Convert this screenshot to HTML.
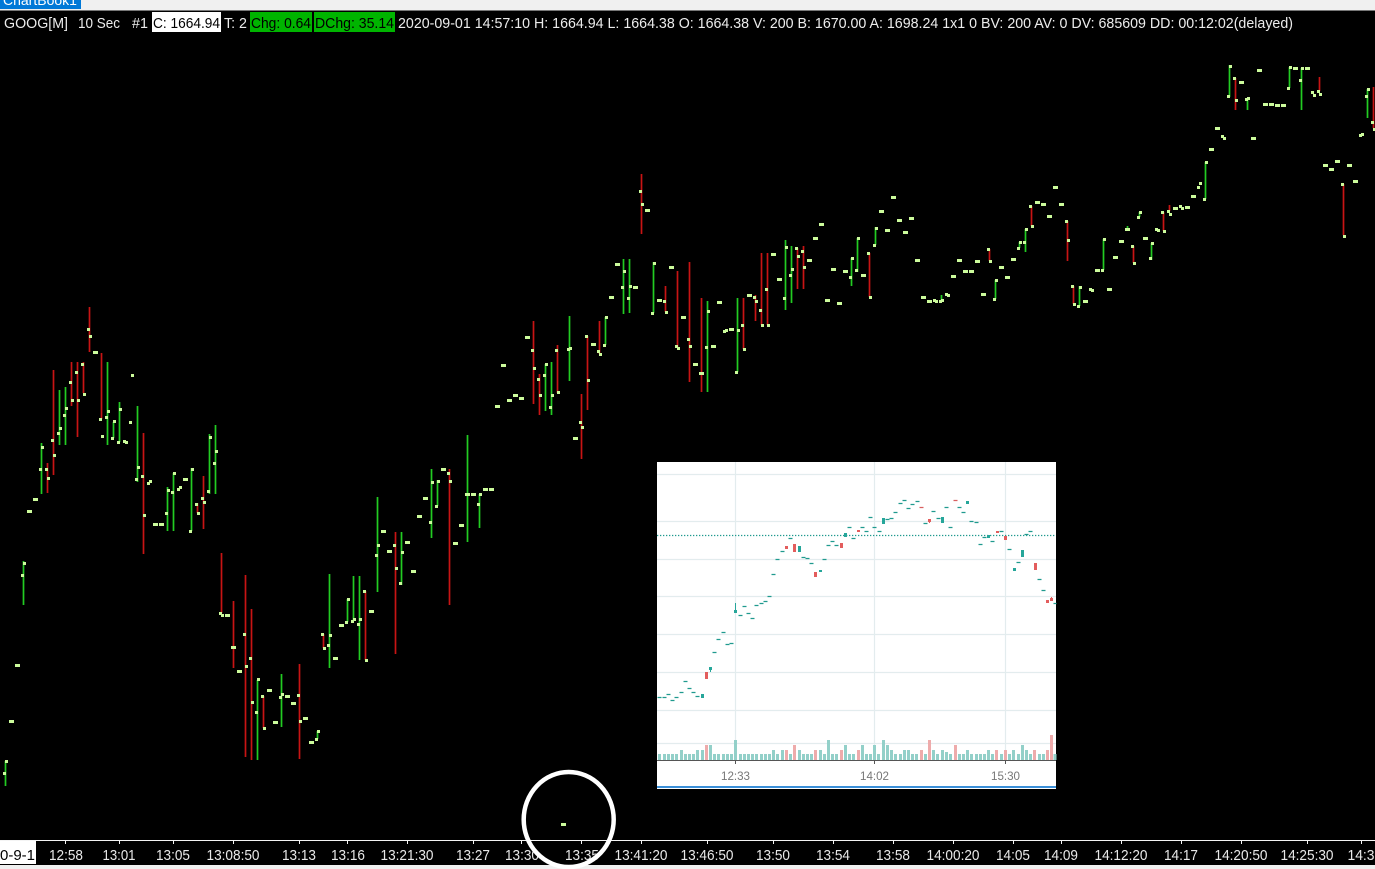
<!DOCTYPE html>
<html lang="en">
<head>
<meta charset="utf-8">
<title>GOOG chart</title>
<style>
html,body{margin:0;padding:0;background:#000;width:1375px;height:869px;overflow:hidden}
svg{display:block;position:absolute;left:0;top:0}
text{font-family:"Liberation Sans",sans-serif}
</style>
</head>
<body>
<svg width="1375" height="869" viewBox="0 0 1375 869" xmlns="http://www.w3.org/2000/svg">
<rect width="1375" height="869" fill="#000"/>
<!-- top strip -->
<rect width="1375" height="10" fill="#f0f0f0"/>
<rect y="10" width="1375" height="1" fill="#777"/>
<rect width="81" height="9" fill="#0078d7"/>
<svg x="0" y="0" width="81" height="9"><text x="3" y="5" font-size="14" fill="#fff">ChartBook1</text></svg>
<!-- header -->
<rect x="152" y="12" width="69" height="20" fill="#fff"/>
<rect x="250" y="12" width="62" height="20" fill="#00b400"/>
<rect x="314" y="12" width="81" height="20" fill="#00b400"/>
<g font-size="15" fill="#ececec">
<text x="4" y="28" textLength="64" lengthAdjust="spacingAndGlyphs">GOOG[M]</text>
<text x="78" y="28" textLength="42" lengthAdjust="spacingAndGlyphs">10 Sec</text>
<text x="132" y="28" textLength="16" lengthAdjust="spacingAndGlyphs">#1</text>
<text x="153" y="28" textLength="67" lengthAdjust="spacingAndGlyphs" fill="#000">C: 1664.94</text>
<text x="224" y="28" textLength="23" lengthAdjust="spacingAndGlyphs">T: 2</text>
<text x="251" y="28" textLength="60" lengthAdjust="spacingAndGlyphs" fill="#000">Chg: 0.64</text>
<text x="315" y="28" textLength="79" lengthAdjust="spacingAndGlyphs" fill="#000">DChg: 35.14</text>
<text x="398" y="28" textLength="895" lengthAdjust="spacingAndGlyphs">2020-09-01 14:57:10 H: 1664.94 L: 1664.38 O: 1664.38 V: 200 B: 1670.00 A: 1698.24 1x1 0 BV: 200 AV: 0 DV: 685609 DD: 00:12:02(delayed)</text>
</g>
<!-- green wicks -->
<path fill="none" stroke="#22cc22" stroke-width="1.7" d="M5.5 761V786M23.5 561V605M41.5 443V494M59.5 390V445M65.5 387V445M107.5 362V445M113.5 422V438M119.5 402V442M137.5 406V482M167.5 487V531M173.5 473V531M191.5 468V531M209.5 434V494M215.5 425V494M257.5 680V760M281.5 674V727M317.5 731V739M329.5 574V668M347.5 599V622M353.5 576V621M359.5 576V660M377.5 497V592M401.5 532V585M431.5 469V538M437.5 480V506M467.5 435V542M479.5 494V528M545.5 364V411M551.5 362V415M569.5 316V381M605.5 317V345M623.5 259V314M629.5 259V313M653.5 262V313M707.5 301V392M737.5 298V372M785.5 240V310M791.5 246V303M851.5 258V286M857.5 238V272M875.5 227V245M941.5 295V301M995.5 280V299M1019.5 242V248M1025.5 229V252M1079.5 286V306M1103.5 239V270M1127.5 226V230M1139.5 212V217M1151.5 243V260M1205.5 162V199M1229.5 65V97M1247.5 98V110M1289.5 67V88M1301.5 68V110M1367.5 89V118"/>
<!-- red wicks -->
<path fill="none" stroke="#c81414" stroke-width="1.7" d="M47.5 463V493M53.5 370V475M71.5 362V406M77.5 362V437M83.5 362V393M89.5 307V352M101.5 353V419M143.5 433V554M197.5 503V513M203.5 476V529M221.5 553V613M233.5 601V668M245.5 575V757M251.5 609V760M263.5 696V728M299.5 664V759M323.5 634V648M365.5 591V660M395.5 532V654M449.5 469V605M533.5 321V404M539.5 374V415M557.5 345V393M581.5 394V459M587.5 336V410M599.5 321V354M641.5 174V234M665.5 286V312M677.5 271V348M689.5 262V382M701.5 298V392M743.5 298V349M755.5 295V321M761.5 253V325M767.5 253V325M797.5 248V289M803.5 246V289M869.5 253V297M989.5 249V261M1031.5 206V226M1067.5 221V261M1073.5 286V304M1133.5 246V263M1163.5 212V231M1169.5 205V211M1235.5 78V110M1319.5 77V91M1343.5 184V235M1373.5 87V128"/>
<!-- open/close ticks -->
<path fill="none" stroke="#ccfb9c" stroke-width="3" d="M3 773.5h3M5 761.5h3M9 721.5h5M15 665.5h5M21 575.5h3M23 563.5h3M27 511.5h5M33 499.5h5M39 469.5h3M41 447.5h3M45 469.5h3M47 478.5h3M51 440.5h3M53 455.5h3M57 433.5h3M59 428.5h3M63 415.5h3M65 408.5h3M69 382.5h3M71 400.5h3M75 372.5h3M77 400.5h3M81 364.5h3M83 394.5h3M87 329.5h3M89 336.5h3M93 352.5h5M99 419.5h3M101 436.5h3M105 417.5h3M107 411.5h3M111 438.5h3M113 421.5h3M117 442.5h3M119 409.5h3M123 441.5h3M125 442.5h3M129 422.5h3M131 375.5h3M135 479.5h3M137 467.5h3M141 476.5h3M143 515.5h3M147 483.5h3M149 481.5h3M153 524.5h5M159 524.5h5M165 513.5h3M167 490.5h3M171 492.5h3M173 473.5h3M177 489.5h3M179 487.5h3M183 479.5h5M189 531.5h3M191 469.5h3M195 504.5h3M197 513.5h3M201 498.5h3M203 502.5h3M207 491.5h3M209 437.5h3M213 463.5h3M215 451.5h3M219 613.5h3M221 615.5h3M225 615.5h5M231 647.5h5M237 671.5h5M243 634.5h3M245 666.5h3M249 658.5h3M251 702.5h3M255 712.5h3M257 679.5h3M261 696.5h3M263 728.5h3M267 690.5h5M273 722.5h5M279 697.5h3M281 694.5h3M285 696.5h5M291 703.5h5M297 695.5h3M299 721.5h3M303 718.5h5M309 742.5h5M315 739.5h3M317 731.5h3M321 634.5h3M323 648.5h3M327 645.5h3M329 635.5h3M333 658.5h5M339 625.5h5M345 622.5h3M347 599.5h3M351 621.5h3M353 619.5h3M357 624.5h3M359 619.5h3M363 591.5h3M365 660.5h3M369 611.5h5M375 555.5h3M377 545.5h3M381 531.5h5M387 551.5h5M393 545.5h3M395 568.5h3M399 583.5h3M401 552.5h3M405 542.5h5M411 571.5h5M417 516.5h5M423 498.5h5M429 522.5h3M431 482.5h3M435 506.5h3M437 481.5h3M441 469.5h5M447 473.5h3M449 481.5h3M453 543.5h5M459 525.5h5M465 494.5h5M471 494.5h5M477 504.5h3M479 494.5h3M483 489.5h5M489 489.5h5M495 406.5h5M501 365.5h5M507 400.5h5M513 395.5h5M519 398.5h5M525 337.5h5M531 350.5h3M533 368.5h3M537 379.5h3M539 395.5h3M543 375.5h3M545 364.5h3M549 407.5h3M551 395.5h3M555 350.5h3M557 392.5h3M561 824.5h5M567 349.5h3M569 348.5h3M573 438.5h5M579 422.5h3M581 427.5h3M585 336.5h3M587 380.5h3M591 344.5h5M597 351.5h3M599 354.5h3M603 345.5h3M605 317.5h3M609 297.5h5M615 264.5h5M621 287.5h3M623 271.5h3M627 298.5h3M629 286.5h3M633 287.5h5M639 191.5h3M641 204.5h3M645 210.5h5M651 313.5h3M653 263.5h3M657 300.5h5M663 301.5h3M665 312.5h3M669 267.5h5M675 346.5h3M677 348.5h3M681 317.5h5M687 339.5h3M689 346.5h3M693 364.5h5M699 373.5h5M705 347.5h3M707 311.5h3M711 346.5h5M717 302.5h5M723 331.5h3M725 330.5h3M729 329.5h5M735 372.5h3M737 330.5h3M741 325.5h3M743 349.5h3M747 295.5h5M753 297.5h3M755 301.5h3M759 310.5h3M761 325.5h3M765 289.5h3M767 325.5h3M771 254.5h5M777 279.5h5M783 298.5h3M785 247.5h3M789 275.5h3M791 269.5h3M795 248.5h3M797 256.5h3M801 251.5h3M803 267.5h3M807 260.5h5M813 238.5h5M819 224.5h5M825 300.5h5M831 269.5h5M837 303.5h5M843 271.5h5M849 277.5h3M851 258.5h3M855 270.5h3M857 238.5h3M861 275.5h5M867 253.5h3M869 297.5h3M873 245.5h3M875 228.5h3M879 211.5h5M885 230.5h5M891 197.5h5M897 220.5h5M903 232.5h5M909 218.5h5M915 260.5h5M921 297.5h5M927 301.5h5M933 300.5h3M935 301.5h3M939 301.5h3M941 300.5h3M945 294.5h3M947 295.5h3M951 276.5h5M957 260.5h5M963 271.5h5M969 271.5h5M975 261.5h5M981 294.5h5M987 249.5h3M989 261.5h3M993 299.5h3M995 280.5h3M999 267.5h5M1005 277.5h5M1011 259.5h5M1017 248.5h3M1019 242.5h3M1023 242.5h3M1025 229.5h3M1029 206.5h3M1031 226.5h3M1035 202.5h5M1041 204.5h5M1047 216.5h5M1053 187.5h5M1059 204.5h5M1065 221.5h3M1067 240.5h3M1071 286.5h3M1073 304.5h3M1077 306.5h3M1079 287.5h3M1083 301.5h5M1089 289.5h3M1091 290.5h3M1095 270.5h5M1101 270.5h3M1103 239.5h3M1107 289.5h5M1113 257.5h5M1119 241.5h5M1125 229.5h5M1131 246.5h3M1133 263.5h3M1137 217.5h3M1139 212.5h3M1143 238.5h5M1149 258.5h3M1151 243.5h3M1155 229.5h3M1157 230.5h3M1161 212.5h3M1163 231.5h3M1167 211.5h3M1169 214.5h3M1173 208.5h5M1179 206.5h3M1181 208.5h3M1185 207.5h5M1191 196.5h5M1197 187.5h3M1199 183.5h3M1203 199.5h3M1205 162.5h3M1209 149.5h5M1215 128.5h5M1221 136.5h3M1223 138.5h3M1227 96.5h3M1229 66.5h3M1233 78.5h3M1235 100.5h3M1239 82.5h5M1245 99.5h3M1247 98.5h3M1251 138.5h5M1257 70.5h5M1263 104.5h5M1269 104.5h5M1275 105.5h5M1281 105.5h5M1287 88.5h3M1289 67.5h3M1293 68.5h5M1299 80.5h3M1301 68.5h3M1305 68.5h5M1311 92.5h3M1313 95.5h3M1317 91.5h3M1319 94.5h3M1323 165.5h5M1329 169.5h5M1335 161.5h5M1341 184.5h3M1343 236.5h3M1347 165.5h5M1353 181.5h5M1359 135.5h3M1361 134.5h3M1365 96.5h3M1367 89.5h3M1371 122.5h3M1373 129.5h3"/>
<!-- bottom axis -->
<rect y="840" width="1375" height="1" fill="#f4f4f4"/>
<path fill="none" stroke="#f4f4f4" stroke-width="1" d="M5.5 841v3M65.5 841v3M119.5 841v3M173.5 841v3M233.5 841v3M299.5 841v3M347.5 841v3M407.5 841v3M473.5 841v3M521.5 841v3M581.5 841v3M641.5 841v3M707.5 841v3M773.5 841v3M833.5 841v3M893.5 841v3M953.5 841v3M1013.5 841v3M1061.5 841v3M1121.5 841v3M1181.5 841v3M1241.5 841v3M1307.5 841v3M1361.5 841v3"/>
<rect y="841" width="36" height="23" fill="#fff"/>
<text x="0" y="860" font-size="15" fill="#000" textLength="35" lengthAdjust="spacingAndGlyphs">0-9-1</text>
<g font-size="15" fill="#e8e8e8" text-anchor="middle">
<text x="66" y="860" textLength="34" lengthAdjust="spacingAndGlyphs">12:58</text>
<text x="119" y="860" textLength="33" lengthAdjust="spacingAndGlyphs">13:01</text>
<text x="173" y="860" textLength="34" lengthAdjust="spacingAndGlyphs">13:05</text>
<text x="233" y="860" textLength="53" lengthAdjust="spacingAndGlyphs">13:08:50</text>
<text x="299" y="860" textLength="34" lengthAdjust="spacingAndGlyphs">13:13</text>
<text x="348" y="860" textLength="34" lengthAdjust="spacingAndGlyphs">13:16</text>
<text x="407" y="860" textLength="53" lengthAdjust="spacingAndGlyphs">13:21:30</text>
<text x="473" y="860" textLength="34" lengthAdjust="spacingAndGlyphs">13:27</text>
<text x="522" y="860" textLength="34" lengthAdjust="spacingAndGlyphs">13:30</text>
<text x="582" y="860" textLength="34" lengthAdjust="spacingAndGlyphs">13:35</text>
<text x="641" y="860" textLength="53" lengthAdjust="spacingAndGlyphs">13:41:20</text>
<text x="707" y="860" textLength="53" lengthAdjust="spacingAndGlyphs">13:46:50</text>
<text x="773" y="860" textLength="34" lengthAdjust="spacingAndGlyphs">13:50</text>
<text x="833" y="860" textLength="34" lengthAdjust="spacingAndGlyphs">13:54</text>
<text x="893" y="860" textLength="34" lengthAdjust="spacingAndGlyphs">13:58</text>
<text x="953" y="860" textLength="53" lengthAdjust="spacingAndGlyphs">14:00:20</text>
<text x="1013" y="860" textLength="34" lengthAdjust="spacingAndGlyphs">14:05</text>
<text x="1061" y="860" textLength="34" lengthAdjust="spacingAndGlyphs">14:09</text>
<text x="1121" y="860" textLength="53" lengthAdjust="spacingAndGlyphs">14:12:20</text>
<text x="1181" y="860" textLength="34" lengthAdjust="spacingAndGlyphs">14:17</text>
<text x="1241" y="860" textLength="53" lengthAdjust="spacingAndGlyphs">14:20:50</text>
<text x="1307" y="860" textLength="53" lengthAdjust="spacingAndGlyphs">14:25:30</text>
<text x="1361" y="860" textLength="27" lengthAdjust="spacingAndGlyphs">14:3</text>
</g>
<rect y="865" width="1375" height="4" fill="#f0f0f0"/>
<!-- circle annotation -->
<ellipse cx="568.7" cy="819.5" rx="45" ry="47.5" fill="none" stroke="#fff" stroke-width="4.5"/>
<!-- inset chart -->
<rect x="657" y="462" width="399" height="327" fill="#fff"/>
<path fill="none" stroke="#e3ecee" stroke-width="1.2" d="M657 474.5H1056M657 521.5H1056M657 559.5H1056M657 596.5H1056M657 634.5H1056M657 672.5H1056M657 710.5H1056M657 743.5H1056M735.5 462V760M874.5 462V760M1005.5 462V760"/>
<path fill="none" stroke="#1f9a8e" stroke-width="1.2" stroke-dasharray="1.3 1.7" d="M657 535.5H1056"/>
<!-- volume -->
<path fill="none" stroke="#93d0c9" stroke-width="3" d="M659.5 760v-6M664.5 760v-6M668.5 760v-6M672.5 760v-6M676.5 760v-6M681.5 760v-10M685.5 760v-6M689.5 760v-6M693.5 760v-6M697.5 760v-10M702.5 760v-10M710.5 760v-15M714.5 760v-6M718.5 760v-6M723.5 760v-6M727.5 760v-6M731.5 760v-6M735.5 760v-20M740.5 760v-6M744.5 760v-6M748.5 760v-6M752.5 760v-6M756.5 760v-6M761.5 760v-6M765.5 760v-6M769.5 760v-6M773.5 760v-10M777.5 760v-6M782.5 760v-10M790.5 760v-6M799.5 760v-10M803.5 760v-6M807.5 760v-6M811.5 760v-6M820.5 760v-10M824.5 760v-6M828.5 760v-20M832.5 760v-6M836.5 760v-6M845.5 760v-15M849.5 760v-6M853.5 760v-6M862.5 760v-15M866.5 760v-6M870.5 760v-6M874.5 760v-15M878.5 760v-6M883.5 760v-20M887.5 760v-15M891.5 760v-10M895.5 760v-6M900.5 760v-6M904.5 760v-10M908.5 760v-10M912.5 760v-6M916.5 760v-6M925.5 760v-6M933.5 760v-10M937.5 760v-6M942.5 760v-10M946.5 760v-8M950.5 760v-6M959.5 760v-6M963.5 760v-6M967.5 760v-10M971.5 760v-6M976.5 760v-6M980.5 760v-6M984.5 760v-6M988.5 760v-10M992.5 760v-6M1001.5 760v-6M1009.5 760v-6M1013.5 760v-10M1018.5 760v-6M1022.5 760v-15M1026.5 760v-10M1030.5 760v-6M1039.5 760v-6M1043.5 760v-6M1055 760v-6"/>
<path fill="none" stroke="#eeabab" stroke-width="3" d="M706.5 760v-15M786.5 760v-10M794.5 760v-15M815.5 760v-10M841.5 760v-10M858.5 760v-10M921.5 760v-10M929.5 760v-20M955.5 760v-15M996.5 760v-10M1005.5 760v-10M1034.5 760v-10M1047.5 760v-10M1051.5 760v-25"/>
<!-- teal dashes -->
<path fill="none" stroke="#1f9a8e" stroke-width="1.3" d="M657.5 697.5h4M662.5 697.5h4M666.5 694.5h4M670.5 700.5h4M674.5 697.5h4M679.5 692.5h4M683.5 681.5h4M687.5 688.5h4M691.5 692.5h4M695.5 696.5h4M712.5 652.5h4M716.5 639.5h4M721.5 632.5h4M725.5 644.5h4M729.5 643.5h4M738.5 615.5h4M742.5 606.5h4M746.5 613.5h4M750.5 618.5h4M754.5 605.5h4M759.5 603.5h4M763.5 601.5h4M767.5 596.5h4M771.5 574.5h4M775.5 559.5h4M780.5 551.5h4M788.5 538.5h4M801.5 557.5h4M805.5 558.5h4M809.5 563.5h4M822.5 559.5h4M826.5 545.5h4M830.5 541.5h4M834.5 545.5h4M847.5 527.5h4M851.5 538.5h4M860.5 527.5h4M864.5 531.5h4M868.5 517.5h4M872.5 527.5h4M877.5 531.5h4M885.5 519.5h4M889.5 518.5h4M893.5 512.5h4M898.5 503.5h4M902.5 500.5h4M906.5 508.5h4M910.5 504.5h4M915.5 501.5h4M923.5 523.5h4M931.5 511.5h4M936.5 518.5h4M944.5 507.5h4M948.5 527.5h4M957.5 507.5h4M961.5 512.5h4M969.5 521.5h4M974.5 522.5h4M978.5 544.5h4M982.5 537.5h4M990.5 541.5h4M999.5 531.5h4M1007.5 549.5h4M1016.5 562.5h4M1024.5 534.5h4M1028.5 531.5h4M1037.5 579.5h4M1041.5 590.5h4M1053.5 603.5h3"/>
<path fill="none" stroke="#d95f5f" stroke-width="1.3" d="M919.5 507.5h4M953.5 500.5h4"/>
<!-- candle bodies -->
<path fill="none" stroke="#26a69a" stroke-width="3" d="M702.5 694V698M710.5 667V670M735.5 610V613M799.5 546V552M820.5 570V572M845.5 533V537M883.5 518V524M942.5 517V523M967.5 501V504M988.5 535V538M1014.5 568V571M1022.5 550V557"/>
<path fill="none" stroke="#e35d5d" stroke-width="3" d="M706.5 672V679M786.5 546V549M794.5 544V552M815.5 572V577M841.5 543V548M858.5 530V532M929.5 519V522M997.5 531V533M1005.5 536V540M1035.5 563V570M1047.5 600V603M1051.5 598V601"/>
<path fill="none" stroke="#26a69a" stroke-width="1" d="M735.5 603V610M710.5 670V672"/>
<path fill="none" stroke="#e35d5d" stroke-width="1" d="M929.5 522V523M1051.5 597V598"/>
<!-- inset axis -->
<rect x="657" y="760" width="399" height="1" fill="#555"/>
<path fill="none" stroke="#555" stroke-width="1" d="M735.5 761v3M874.5 761v3M1005.5 761v3"/>
<g font-size="12" fill="#777" text-anchor="middle">
<text x="735.5" y="780" textLength="29" lengthAdjust="spacingAndGlyphs">12:33</text>
<text x="874.5" y="780" textLength="29" lengthAdjust="spacingAndGlyphs">14:02</text>
<text x="1005.5" y="780" textLength="29" lengthAdjust="spacingAndGlyphs">15:30</text>
</g>
<rect x="657" y="786" width="399" height="2" fill="#3a8fd8"/>
</svg>
</body>
</html>
